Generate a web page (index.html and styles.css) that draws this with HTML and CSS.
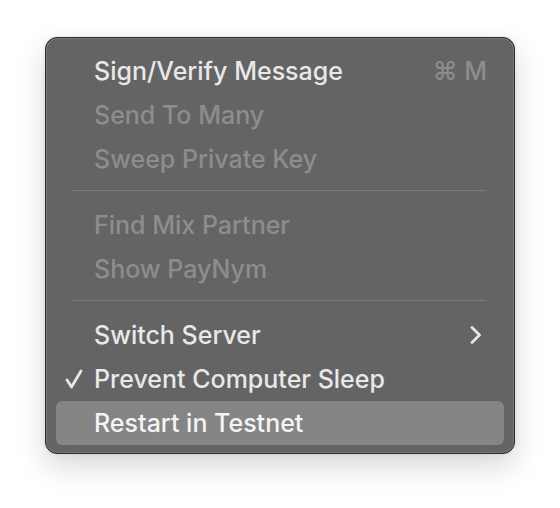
FILE: index.html
```html
<!DOCTYPE html>
<html>
<head>
<meta charset="utf-8">
<link rel="stylesheet" href="styles.css">
</head>
<body>
<div class="menu">
  <div class="row"><span class="label">Sign/Verify Message</span><span class="shortcut">⌘ M</span></div>
  <div class="row disabled"><span class="label">Send To Many</span></div>
  <div class="row disabled"><span class="label">Sweep Private Key</span></div>
  <div class="sep"></div>
  <div class="row disabled"><span class="label">Find Mix Partner</span></div>
  <div class="row disabled"><span class="label">Show PayNym</span></div>
  <div class="sep"></div>
  <div class="row"><span class="label">Switch Server</span>
    <svg class="chev" width="12" height="18" viewBox="0 0 12 18"><path d="M2 1.5 L9.5 9 L2 16.5" fill="none" stroke="#e4e4e4" stroke-width="2.8" stroke-linecap="round" stroke-linejoin="round"/></svg>
  </div>
  <div class="row"><svg class="check" width="18" height="22" viewBox="0 0 18 22"><path d="M2 12 L6.5 19 L16 3" fill="none" stroke="#e6e6e6" stroke-width="2.8" stroke-linecap="round" stroke-linejoin="round"/></svg><span class="label">Prevent Computer Sleep</span></div>
  <div class="row active"><span class="label">Restart in Testnet</span></div>
</div>
</body>
</html>
```
FILE: styles.css
```css
html, body {
  margin: 0;
  padding: 0;
  background: #ffffff;
}
body {
  box-sizing: border-box;
  min-height: 508px;
  padding: 37px 0 0 45px;
  font-family: Inter, "Noto Sans", sans-serif;
}
.menu {
  box-sizing: border-box;
  width: 470px;
  height: 417px;
  background: #646464;
  border: 1px solid #2b2b2b;
  border-radius: 12px;
  box-shadow: inset 0 0 0 1px rgba(255,255,255,0.13), 0 12px 30px rgba(0,0,0,0.16), 0 0 4px rgba(0,0,0,0.08);
  padding: 11px 10px 8px 10px;
  display: flex;
  flex-direction: column;
}
.row {
  position: relative;
  height: 44px;
  display: flex;
  align-items: center;
  padding: 0 17px 0 38px;
  border-radius: 6px;
  color: #e8e8e8;
  font-size: 25px;
  font-weight: 450;
  letter-spacing: 0;
}
.row.disabled {
  color: #8d8d8d;
}
.row.active {
  background: #858585;
  color: #f4f4f4;
}
.label {
  flex: 1;
  white-space: nowrap;
}
.shortcut {
  color: #8d8d8d;
  font-size: 25px;
}
.chev {
  margin-right: 5px;
}
.check {
  position: absolute;
  left: 9px;
  top: 11px;
}
.sep {
  height: 1px;
  margin: 9px 18px 12px 17px;
  background: #7b7b7b;
}
```
